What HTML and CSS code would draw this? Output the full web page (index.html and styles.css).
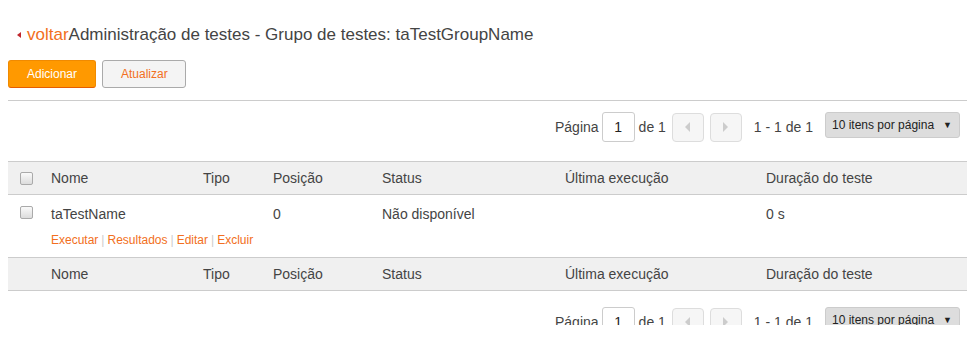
FILE: index.html
```html
<!DOCTYPE html>
<html lang="pt-BR">
<head>
    <meta charset="UTF-8">
    <title>Administração de testes</title>
    <link rel="stylesheet" href="styles.css">
</head>
<body>
    <div class="page">
        <h1 class="title">
            <a class="back" href="#"><span class="back-caret"></span>voltar</a>Administração de testes - Grupo de testes: taTestGroupName
        </h1>
        <div class="toolbar">
            <button class="btn btn-primary">Adicionar</button>
            <button class="btn btn-default">Atualizar</button>
        </div>
        <div class="pager">
            <span>Página</span>
            <span class="page-input">1</span>
            <span>de 1</span>
            <span class="page-btn"><span class="tri tri-left"></span></span>
            <span class="page-btn"><span class="tri tri-right"></span></span>
            <span class="range">1 - 1 de 1</span>
            <span class="per-page">10 itens por página <span class="arrow">▼</span></span>
        </div>
        <table class="grid">
            <thead>
                <tr>
                    <th class="col-cb"><span class="cb"></span></th>
                    <th class="col-nome">Nome</th>
                    <th class="col-tipo">Tipo</th>
                    <th class="col-pos">Posição</th>
                    <th class="col-status">Status</th>
                    <th class="col-exec">Última execução</th>
                    <th>Duração do teste</th>
                </tr>
            </thead>
            <tbody>
                <tr>
                    <td class="col-cb"><span class="cb"></span></td>
                    <td>taTestName</td>
                    <td></td>
                    <td>0</td>
                    <td>Não disponível</td>
                    <td></td>
                    <td>0 s</td>
                </tr>
                <tr class="actions-row">
                    <td></td>
                    <td colspan="6" class="actions">
                        <a href="#">Executar</a><span class="sep">|</span><a href="#">Resultados</a><span class="sep">|</span><a href="#">Editar</a><span class="sep">|</span><a href="#">Excluir</a>
                    </td>
                </tr>
            </tbody>
            <tfoot>
                <tr>
                    <th class="col-cb"></th>
                    <th>Nome</th>
                    <th>Tipo</th>
                    <th>Posição</th>
                    <th>Status</th>
                    <th>Última execução</th>
                    <th>Duração do teste</th>
                </tr>
            </tfoot>
        </table>
        <div class="pager pager-bottom">
            <span>Página</span>
            <span class="page-input">1</span>
            <span>de 1</span>
            <span class="page-btn"><span class="tri tri-left"></span></span>
            <span class="page-btn"><span class="tri tri-right"></span></span>
            <span class="range">1 - 1 de 1</span>
            <span class="per-page">10 itens por página <span class="arrow">▼</span></span>
        </div>
    </div>
</body>
</html>
```

FILE: styles.css
```css
body {
    margin: 0;
    padding: 0;
    background-color: #fff;
    font-family: "Liberation Sans", Arial, sans-serif;
    color: #444;
}
.page {
    height: 325px;
    overflow: hidden;
    padding: 0 8px;
}
.title {
    margin: 0;
    padding-top: 25px;
    height: 20px;
    line-height: 20px;
    font-size: 17px;
    font-weight: normal;
    color: #444;
}
.back {
    color: #f26f21;
    text-decoration: none;
}
.back-caret {
    display: inline-block;
    width: 0;
    height: 0;
    border-top: 3px solid transparent;
    border-bottom: 3px solid transparent;
    border-right: 4px solid #c0272d;
    margin: 0 6px 0 9px;
    vertical-align: 2px;
}
.toolbar {
    display: flex;
    gap: 6px;
    margin-top: 15px;
    padding-bottom: 12px;
    border-bottom: 1px solid #ccc;
}
.btn {
    height: 28px;
    padding: 0 18px;
    font-family: "Liberation Sans", Arial, sans-serif;
    font-size: 12px;
    border-radius: 3px;
    cursor: pointer;
}
.btn-primary {
    width: 88px;
    background-color: #ff9900;
    border: 1px solid #f08a00;
    border-bottom-color: #e65c00;
    color: #fff;
}
.btn-default {
    width: 84px;
    background-color: #f4f4f4;
    border: 1px solid #aaa;
    color: #f26f21;
}
.pager {
    display: flex;
    justify-content: flex-end;
    align-items: center;
    margin-top: 11px;
    padding-right: 7px;
    font-size: 14px;
    color: #444;
}
.page-input {
    width: 31px;
    height: 28px;
    margin: 0 4px 0 3px;
    border: 1px solid #ccc;
    border-radius: 3px;
    display: flex;
    justify-content: center;
    align-items: center;
    color: #222;
}
.page-btn {
    width: 30px;
    height: 27px;
    margin-left: 6px;
    border: 1px solid #ddd;
    border-radius: 4px;
    background-color: #f6f6f6;
    display: flex;
    justify-content: center;
    align-items: center;
}
.page-btn:first-of-type {
    margin-left: 5px;
}
.tri {
    width: 0;
    height: 0;
    border-top: 5px solid transparent;
    border-bottom: 5px solid transparent;
}
.tri-left {
    border-right: 5px solid #ccc;
}
.tri-right {
    border-left: 5px solid #ccc;
}
.range {
    margin: 0 12px;
}
.per-page {
    box-sizing: border-box;
    width: 135px;
    height: 26px;
    padding: 0 7px 0 6px;
    background-color: #ddd;
    border: 1px solid #ccc;
    border-radius: 3px;
    display: flex;
    justify-content: space-between;
    align-items: center;
    font-size: 12px;
    color: #222;
    margin-top: -4px;
}
.arrow {
    font-size: 9px;
}
.grid {
    width: 100%;
    margin-top: 19px;
    border-collapse: collapse;
    font-size: 14px;
}
.grid th {
    height: 32px;
    padding: 0 10px;
    text-align: left;
    font-weight: normal;
    color: #444;
    background-color: #f0f0f0;
    border-top: 1px solid #ccc;
    border-bottom: 1px solid #ccc;
}
.grid td {
    padding: 0 10px;
    height: 38px;
    color: #444;
}
.grid .col-cb {
    width: 13px;
    padding: 0 8px 0 12px;
}
.col-nome { width: 132px; }
.col-tipo { width: 50px; }
.col-pos { width: 89px; }
.col-status { width: 163px; }
.col-exec { width: 181px; }
.cb {
    display: block;
    width: 11px;
    height: 11px;
    border: 1px solid #aaa;
    border-radius: 2px;
    background: linear-gradient(#fafafa, #dcdcdc);
}
.grid td .cb {
    margin-top: -3px;
}
.grid .actions-row td {
    height: 24px;
    vertical-align: top;
    padding-top: 0;
}
.actions {
    font-size: 12px;
}
.actions a {
    color: #f26f21;
    text-decoration: none;
}
.sep {
    color: #ccc;
    margin: 0 3px;
}
.pager-bottom {
    margin-top: 16px;
}
```
